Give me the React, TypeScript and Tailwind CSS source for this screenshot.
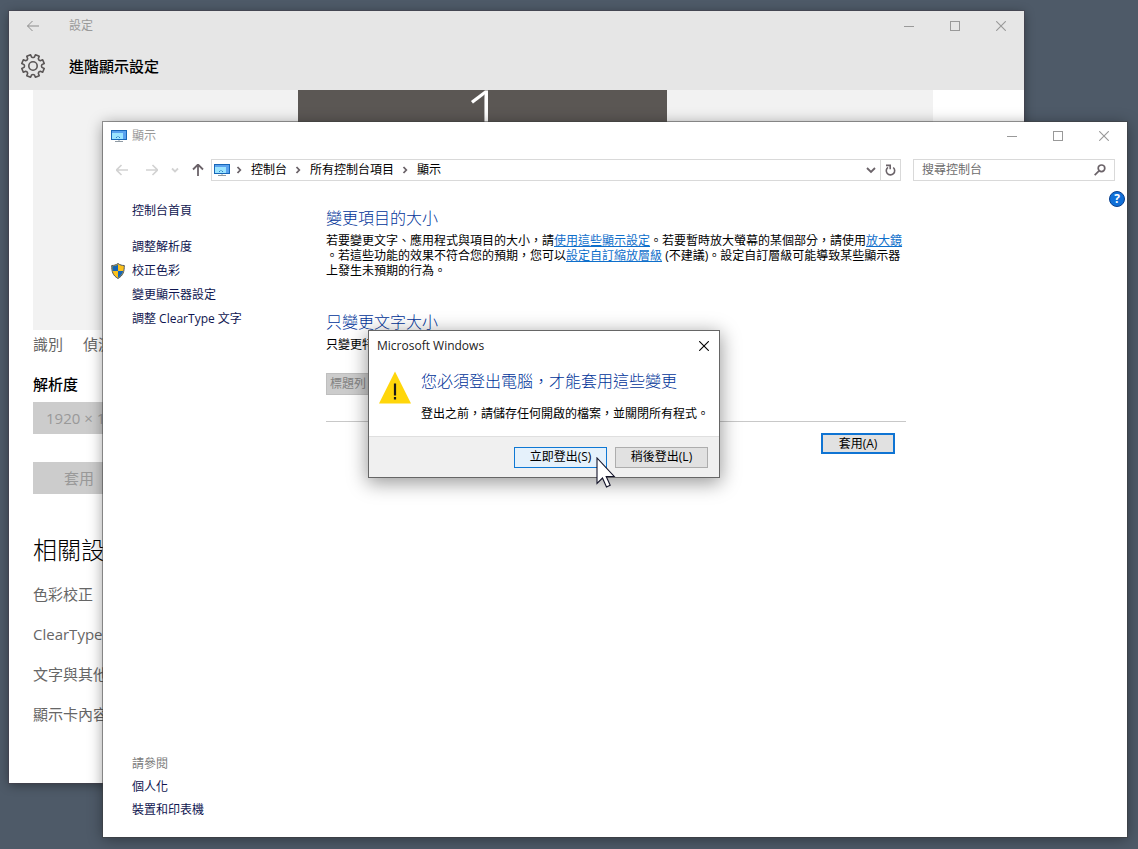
import { ReactNode } from "react";

const GEAR_TEETH = 8;

function gearPath(outer: number, inner: number) {
  const step = (Math.PI * 2) / GEAR_TEETH;
  const point = (r: number, a: number) =>
    `${(13 + r * Math.cos(a)).toFixed(2)} ${(13 + r * Math.sin(a)).toFixed(2)}`;
  const parts: string[] = [];
  for (let i = 0; i < GEAR_TEETH; i++) {
    const a = (i + 0.5) * step;
    parts.push(`${i === 0 ? "M" : "L"}${point(inner, a - 0.24)}`);
    parts.push(`L${point(outer, a - 0.18)}`);
    parts.push(`L${point(outer, a + 0.18)}`);
    parts.push(`L${point(inner, a + 0.24)}`);
    parts.push(`Q${point(inner - 1, a + step / 2)} ${point(inner, a + step - 0.24)}`);
  }
  return parts.join("") + "Z";
}

function GearIcon() {
  return (
    <svg width="26" height="26" viewBox="0 0 26 26" fill="none" stroke="#5a5656" strokeWidth="1.6" strokeLinejoin="round">
      <path d={gearPath(11.5, 9)} />
      <circle cx="13" cy="13" r="4.2" />
    </svg>
  );
}

function MonitorIcon() {
  return (
    <svg width="16" height="12" viewBox="0 0 16 12" className="shrink-0">
      <rect x="0.5" y="0.5" width="15" height="9" fill="#5aa2ee" stroke="#1767b8" />
      <rect x="1" y="3" width="11" height="6" fill="#9be4ff" />
      <path d="M5 7.5h1M8 7.5h1M6.5 6.5h1" stroke="#2f7fc4" />
      <path d="M4 11.5h8" stroke="#8f9aa3" />
      <path d="M7 10.5h2" stroke="#c9ced2" />
    </svg>
  );
}

function ArrowIcon({ className }: { className?: string }) {
  return (
    <svg width="12" height="12" viewBox="0 0 12 12" fill="none" stroke="currentColor" className={className}>
      <path d="M0.5 6H12M5.5 1L0.5 6l5 5" />
    </svg>
  );
}

function Chevron({ className, d }: { className?: string; d: string }) {
  return (
    <svg width="10" height="8" viewBox="0 0 10 8" fill="none" stroke="currentColor" strokeWidth="1.8" className={className}>
      <path d={d} />
    </svg>
  );
}

function ShieldIcon() {
  return (
    <svg width="14" height="16" viewBox="0 0 14 16">
      <path d="M7 0.5C5 2 3 2.5 0.7 2.5c0 6 1 10 6.3 13 5.3-3 6.3-7 6.3-13C11 2.5 9 2 7 0.5z" fill="#fcc11a" stroke="#4c5560" />
      <path d="M7 1.5C5.3 2.7 3.5 3.2 1.3 3.2c0 1.8.1 3.4.5 4.800H7z" fill="#1565b5" />
      <path d="M7 8h5.2c-.7 3-2.2 5-5.2 6.8z" fill="#1565b5" />
    </svg>
  );
}

function CloseGlyph() {
  return (
    <svg width="10" height="10" viewBox="0 0 10 10" stroke="currentColor" strokeWidth="1.1">
      <path d="M0.2 0.2l9.6 9.6M9.8 0.2l-9.6 9.6" />
    </svg>
  );
}

function WindowControls() {
  const button = "flex h-8 w-[46px] items-center justify-center";
  return (
    <div className="flex text-[#999999]">
      <button aria-label="最小化" className={button}>
        <svg width="10" height="10" viewBox="0 0 10 10" stroke="currentColor">
          <path d="M0 5.5h10" />
        </svg>
      </button>
      <button aria-label="最大化" className={button}>
        <svg width="10" height="10" viewBox="0 0 10 10" fill="none" stroke="currentColor">
          <rect x="0.5" y="0.5" width="9" height="9" />
        </svg>
      </button>
      <button aria-label="關閉" className={button}>
        <CloseGlyph />
      </button>
    </div>
  );
}

function SettingsWindow() {
  const related = ["色彩校正", "ClearType 文字", "文字與其他項目的大小調整", "顯示卡內容"];
  return (
    <section className="absolute top-[11px] right-[114px] bottom-[66px] left-[9px] flex flex-col overflow-hidden bg-white shadow-[0_0_0_1px_rgba(70,62,74,0.5),0_2px_10px_rgba(0,0,0,0.4)]">
      <header className="h-[79px] shrink-0 bg-[#e6e6e6]">
        <div className="flex h-[30px] items-center">
          <button aria-label="上一步" className="flex w-12 justify-center text-[#8c8c8c]">
            <ArrowIcon />
          </button>
          <span className="ml-3 flex-1 text-xs text-[#999999]">設定</span>
          <WindowControls />
        </div>
        <div className="flex h-[50px] items-center">
          <div className="flex w-12 justify-center">
            <GearIcon />
          </div>
          <h1 className="ml-3 text-[15px] font-medium text-black">進階顯示設定</h1>
        </div>
      </header>

      <div className="px-6 text-[15px] text-[#666666]">
        <div className="mr-[67px] flex h-60 justify-center bg-[#f2f2f2] pr-px">
          <div className="h-[208px] w-[369px] overflow-hidden bg-[#5b5754] pl-1 text-center text-7xl leading-none font-light text-white">
            <div className="-mt-3">1</div>
          </div>
        </div>
        <div className="flex h-7 items-center gap-5">
          <a href="#identify">識別</a>
          <a href="#detect">偵測</a>
        </div>
        <label htmlFor="resolution" className="mt-3.5 block leading-6 font-medium text-black">
          解析度
        </label>
        <select id="resolution" disabled className="mt-1.5 h-8 w-[280px] appearance-none bg-[#cccccc] px-[13px] text-[#999999]">
          <option>1920 × 1080</option>
        </select>
        <button disabled className="mt-7 block h-8 w-[92px] bg-[#cccccc] text-[#999999]">
          套用
        </button>
        <h2 className="mt-10 text-2xl leading-8 font-light text-black">相關設定</h2>
        <ul className="mt-2">
          {related.map((item) => (
            <li key={item} className="flex h-10 items-center whitespace-nowrap">
              <a href="#related">{item}</a>
            </li>
          ))}
        </ul>
      </div>
    </section>
  );
}

function SideLink({ children, icon }: { children: ReactNode; icon?: ReactNode }) {
  return (
    <a href="#task" className="flex h-[23px] items-center text-[#0f1650]">
      <span className="flex w-[29px] justify-center">{icon}</span>
      {children}
    </a>
  );
}

function AddressBar() {
  const crumbs = ["控制台", "所有控制台項目", "顯示"];
  return (
    <div className="flex h-[22px] items-center pr-3">
      <button aria-label="上一頁" className="ml-[13px] text-[#d2d2d2]">
        <ArrowIcon className="stroke-[1.6]" />
      </button>
      <button aria-label="下一頁" className="ml-[18px] text-[#d2d2d2]">
        <ArrowIcon className="rotate-180 stroke-[1.6]" />
      </button>
      <button aria-label="最近的位置" className="ml-3 text-[#d2d2d2]">
        <Chevron d="M2 2.5l3 3 3-3" />
      </button>
      <button aria-label="上移" className="ml-3 text-[#6b6369]">
        <ArrowIcon className="rotate-90 stroke-[1.8]" />
      </button>
      <nav className="ml-[7px] flex h-[22px] flex-1 items-center border border-[#d9d9d9] pl-0.5">
        <MonitorIcon />
        {crumbs.map((crumb, i) => (
          <span key={crumb} className={i === 0 ? "ml-[5px] flex items-center" : "ml-[7px] flex items-center"}>
            <Chevron className="mr-1.5 text-[#6b6369]" d="M2.500 1l2.800 3-2.800 3" />
            <a href="#crumb" className="text-black">{crumb}</a>
          </span>
        ))}
        <button aria-label="舊位置" className="mr-1 ml-auto text-[#6b6369]">
          <Chevron d="M1 2l4 4 4-4" />
        </button>
        <button aria-label="重新整理" className="flex h-full w-5 items-center justify-center border-l border-[#d9d9d9] text-[#6b6369]">
          <svg width="11" height="12" viewBox="0 0 11 12" fill="none" stroke="currentColor" strokeWidth="1.6">
            <path d="M3 3.300A4.200 4.200 0 1 0 8.200 3.500M1 1.400H5.200V5.200" />
          </svg>
        </button>
      </nav>
      <div className="ml-3 flex h-[22px] w-[202px] items-center border border-[#d9d9d9] px-2">
        <input aria-label="搜尋控制台" placeholder="搜尋控制台" className="min-w-0 flex-1 outline-none placeholder:text-[#6d6d6d]" />
        <svg width="12" height="12" viewBox="0 0 12 12" fill="none" stroke="#6b6369" strokeWidth="1.7">
          <circle cx="7.5" cy="4.3" r="3.3" />
          <path d="M5 6.800L0.700 11.200" />
        </svg>
      </div>
    </div>
  );
}

function DisplayWindow() {
  const link = "text-[#0f6fcb] underline";
  return (
    <section className="absolute top-[122px] right-[11px] bottom-3 left-[103px] flex flex-col bg-white text-xs shadow-[0_0_0_1px_rgba(60,60,60,0.5),0_2px_14px_rgba(0,0,0,0.4)]">
      <header className="flex h-[37px] items-start pl-2">
        <div className="flex h-7 flex-1 items-center gap-[5px] text-[#999999]">
          <MonitorIcon />
          <span>顯示</span>
        </div>
        <div className="-mt-0.5">
          <WindowControls />
        </div>
      </header>
      <AddressBar />

      <div className="relative flex flex-1">
        <button
          aria-label="說明"
          className="absolute top-[10px] right-0.5 flex size-4 items-center justify-center rounded-full border border-[#0a3f8c] bg-[#0f6fd8] text-xs leading-none font-bold text-white"
        >
          ?
        </button>
        <aside className="flex w-[223px] shrink-0 flex-col pt-[18px] pb-4">
          <SideLink>控制台首頁</SideLink>
          <div className="mt-[13px] flex flex-col gap-px">
            <SideLink>調整解析度</SideLink>
            <SideLink icon={<ShieldIcon />}>校正色彩</SideLink>
            <SideLink>變更顯示器設定</SideLink>
            <SideLink>調整 ClearType 文字</SideLink>
          </div>
          <div className="mt-auto">
            <p className="flex h-[23px] items-center pl-[29px] text-[#7a7a7a]">請參閱</p>
            <SideLink>個人化</SideLink>
            <SideLink>裝置和印表機</SideLink>
          </div>
        </aside>

        <main className="w-[580px] pt-[25px] text-black">
          <h2 className="text-base leading-6 font-light text-[#003399]">變更項目的大小</h2>
          <p className="mt-[3px] leading-[15px] whitespace-nowrap">
            若要變更文字、應用程式與項目的大小，請<a href="#settings" className={link}>使用這些顯示設定</a>。若要暫時放大螢幕的某個部分，請使用<a href="#magnifier" className={link}>放大鏡</a>
            <br />
            。若這些功能的效果不符合您的預期，您可以<a href="#custom" className={link}>設定自訂縮放層級</a> (不建議)。設定自訂層級可能導致某些顯示器
            <br />
            上發生未預期的行為。
          </p>
          <h2 className="mt-8 text-base leading-6 font-light text-[#003399]">只變更文字大小</h2>
          <label htmlFor="text-item" className="mt-[3px] block leading-[15px]">
            只變更特定項目的文字大小。
          </label>
          <select id="text-item" disabled className="mt-[21px] block h-[22px] w-[150px] appearance-none border border-[#bfbfbf] bg-[#cccccc] px-[3px] text-[#838383]">
            <option>標題列</option>
          </select>
          <div className="mt-[26px] flex justify-end border-t border-[#c8c8c8] pt-[11px] pr-[11px]">
            <button className="h-[21px] w-[74px] border-2 border-[#0f74d3] bg-[#e1e1e1]">套用(A)</button>
          </div>
        </main>
      </div>
    </section>
  );
}

function SignOutDialog() {
  return (
    <div
      role="dialog"
      aria-labelledby="dialog-title"
      className="absolute top-[331px] left-[369px] w-[350px] bg-white text-xs text-black shadow-[0_0_0_1px_#666666,0_4px_18px_2px_rgba(0,0,0,0.4)]"
    >
      <header className="flex h-[29px] items-center justify-between pl-2">
        <span id="dialog-title" className="text-[#222222]">Microsoft Windows</span>
        <button aria-label="關閉" className="flex w-[30px] justify-center">
          <CloseGlyph />
        </button>
      </header>
      <div className="flex h-[76px] pt-[9px] pl-2.5">
        <svg width="32" height="33" viewBox="0 0 32 33" className="mt-0.5">
          <path d="M16 0.5L32 32.5H0z" fill="#ffd60a" />
          <path d="M16 12.5v12M16 26v2.5" stroke="#1a1a1a" strokeWidth="2.2" />
        </svg>
        <div className="ml-2.5">
          <h2 className="text-base leading-6 font-light text-[#003399]">您必須登出電腦，才能套用這些變更</h2>
          <p className="mt-[13px] leading-4">登出之前，請儲存任何開啟的檔案，並關閉所有程式。</p>
        </div>
      </div>
      <footer className="flex h-[41px] items-center justify-end gap-2 border-t border-[#dfdfdf] bg-[#f0f0f0] pr-[11px]">
        <button className="h-[21px] w-[93px] border border-[#0f78d4] bg-[#e5f1fb]">立即登出(S)</button>
        <button className="h-[21px] w-[93px] border border-[#adadad] bg-[#e1e1e1]">稍後登出(L)</button>
      </footer>
    </div>
  );
}

function Cursor() {
  return (
    <svg width="20" height="31" viewBox="0 0 20 31" className="pointer-events-none absolute top-[457px] left-[596px]">
      <path d="M1 1v25.5l5.5-5.5 4 9 3.7-1.7-4-8.800h8z" fill="#ffffff" stroke="#14142a" strokeWidth="1.1" />
    </svg>
  );
}

export default function App() {
  return (
    <div className="relative h-screen min-h-[600px] overflow-hidden bg-[#4e5a68] font-['Open_Sans','Noto_Sans_CJK_TC',sans-serif]" lang="zh-Hant">
      <SettingsWindow />
      <DisplayWindow />
      <SignOutDialog />
      <Cursor />
    </div>
  );
}
